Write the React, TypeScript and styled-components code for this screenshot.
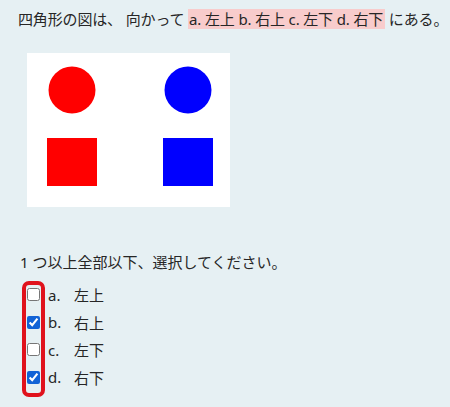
import styled, { createGlobalStyle } from 'styled-components'

const GlobalStyle = createGlobalStyle`
  html, body {
    margin: 0;
    padding: 0;
    background: #e6f0f3;
  }
  body {
    font-family: "Noto Sans", "Noto Sans CJK JP", sans-serif;
    color: #262626;
  }
`

const Page = styled.div`
  width: 450px;
  height: 407px;
  overflow: hidden;
  padding: 9px 0 0 18px;
  box-sizing: border-box;
  font-size: 15px;
`

const Statement = styled.p`
  margin: 0;
  line-height: 21px;
  white-space: nowrap;
  letter-spacing: -0.15px;
`

const Mark = styled.span`
  background: #f8cccc;
  padding: 0 2px 0 1px;
`

const Figure = styled.div`
  margin: 23px 0 0 9px;
  width: 203px;
  height: 154px;
  background: #ffffff;
`

const Question = styled.p`
  margin: 45px 0 0 2px;
  line-height: 20px;
`

const Options = styled.div`
  position: relative;
  margin-top: 9px;
  display: flex;
  flex-direction: column;
`

const Option = styled.label`
  display: flex;
  align-items: center;
  height: 27.5px;
  padding-left: 7px;
`

const Box = styled.input`
  width: 13px;
  height: 13px;
  margin: 0 8px 0 2px;
  accent-color: #1263d6;
`

const Letter = styled.span`
  width: 26px;
`

const Highlight = styled.div`
  position: absolute;
  left: 4px;
  top: 0;
  width: 23px;
  height: 116px;
  box-sizing: border-box;
  border: 4px solid #e0121c;
  border-radius: 7px;
  pointer-events: none;
`

const items = [
  { key: 'a.', text: '左上', checked: false },
  { key: 'b.', text: '右上', checked: true },
  { key: 'c.', text: '左下', checked: false },
  { key: 'd.', text: '右下', checked: true },
]

export default function App() {
  return (
    <>
      <GlobalStyle />
      <Page>
        <Statement>
          四角形の図は、 向かって <Mark>a. 左上 b. 右上 c. 左下 d. 右下</Mark> にある。
        </Statement>
        <Figure>
          <svg width="203" height="154" viewBox="0 0 203 154">
            <circle cx="45" cy="37" r="23.5" fill="#ff0000" />
            <circle cx="161" cy="37" r="23.5" fill="#0000ff" />
            <rect x="20" y="85" width="50" height="48" fill="#ff0000" />
            <rect x="136" y="85" width="50" height="48" fill="#0000ff" />
          </svg>
        </Figure>
        <Question>1 つ以上全部以下、選択してください。</Question>
        <Options>
          {items.map((it) => (
            <Option key={it.key}>
              <Box type="checkbox" defaultChecked={it.checked} />
              <Letter>{it.key}</Letter>
              <span>{it.text}</span>
            </Option>
          ))}
          <Highlight />
        </Options>
      </Page>
    </>
  )
}
